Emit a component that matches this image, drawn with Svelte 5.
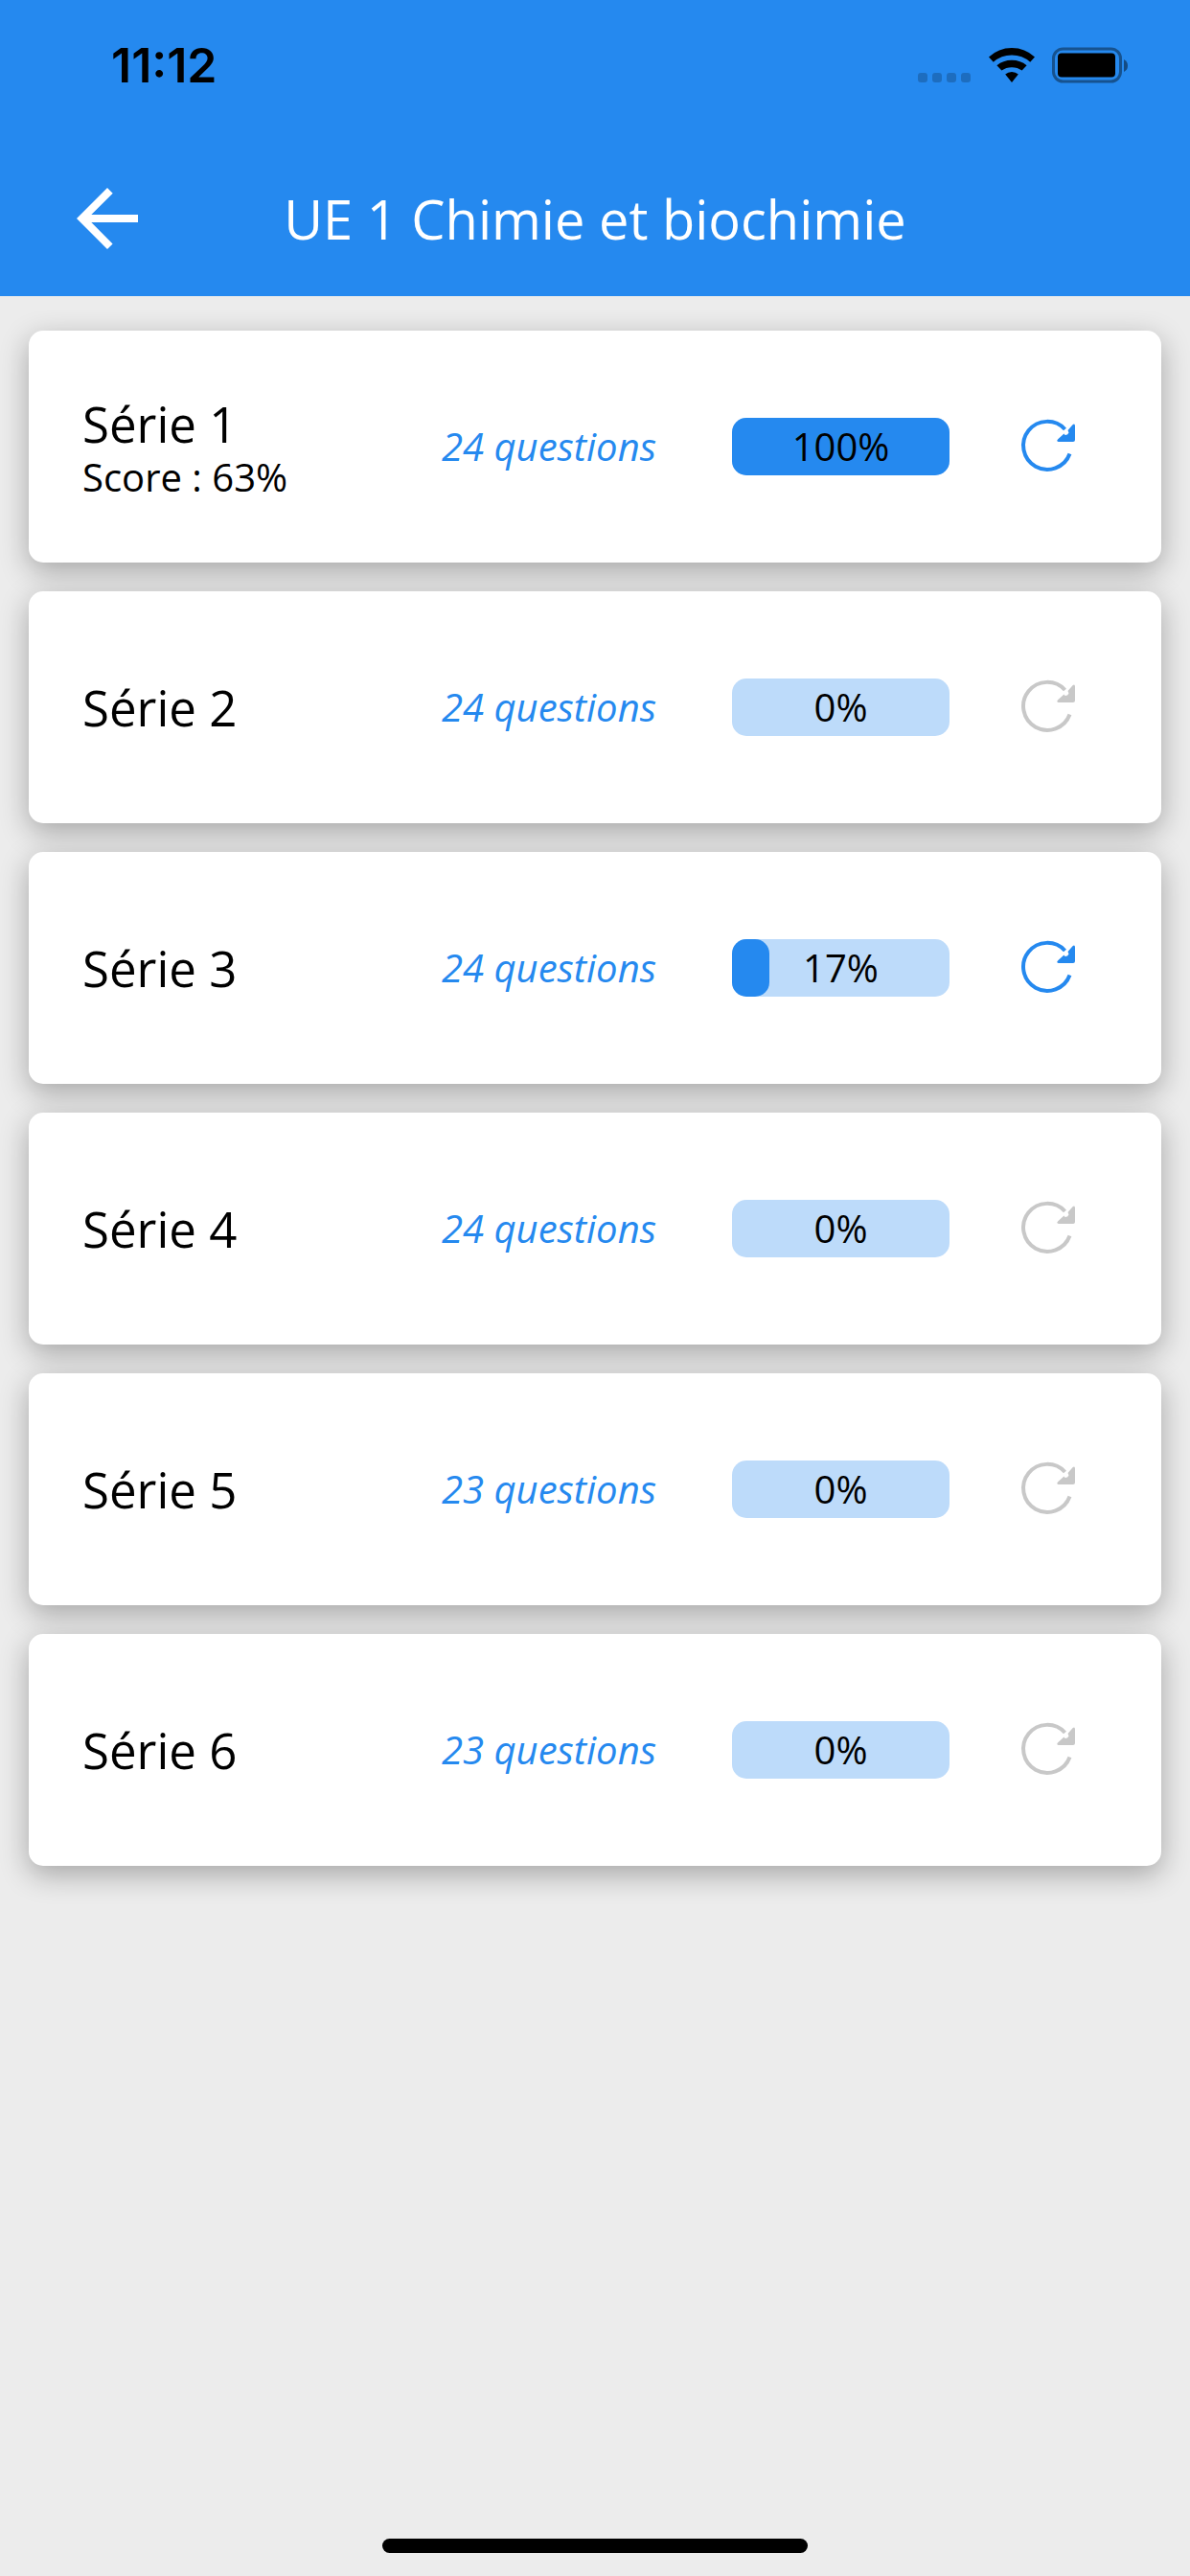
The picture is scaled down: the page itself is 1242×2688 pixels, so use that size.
<script>
  const series = [
    { name: 'Série 1', score: 63, questions: 24, progress: 100 },
    { name: 'Série 2', score: null, questions: 24, progress: 0 },
    { name: 'Série 3', score: null, questions: 24, progress: 17 },
    { name: 'Série 4', score: null, questions: 24, progress: 0 },
    { name: 'Série 5', score: null, questions: 23, progress: 0 },
    { name: 'Série 6', score: null, questions: 23, progress: 0 }
  ];
</script>

<div class="screen">
  <header>
    <div class="status">
      <time>11:12</time>
      <div class="indicators">
        <svg class="signal" viewBox="0 0 56 38" aria-hidden="true">
          <rect x="0" y="27" width="10" height="10" rx="3" />
          <rect x="15" y="27" width="10" height="10" rx="3" />
          <rect x="30" y="27" width="10" height="10" rx="3" />
          <rect x="45" y="27" width="10" height="10" rx="3" />
        </svg>
        <svg class="wifi" viewBox="0 0 48 38" aria-hidden="true">
          <path d="M0 10.600Q10 1 24 1T48 10.600L43.200 15.800Q35 8.600 24 8.600T4.800 15.800Z" />
          <path d="M8.400 19.200Q15 13.700 24 13.700T39.600 19.200L34.600 24.600Q30 21.200 24 21.200T13.400 24.600Z" />
          <path d="M17.200 28.600Q20 26 24 26T30.800 28.600L24 37Z" />
        </svg>
        <svg class="battery" viewBox="0 0 80 38" aria-hidden="true">
          <rect class="shell" x="1.500" y="2" width="70" height="34" rx="10" />
          <rect x="6" y="6.500" width="60" height="25" rx="4" />
          <path class="cap" d="M75 13Q79 15 79 19.500T75 26Z" />
        </svg>
      </div>
    </div>
    <nav>
      <button class="back" type="button" aria-label="Retour">
        <svg viewBox="0 0 64 64" aria-hidden="true">
          <path d="M64 28H15.300L37.700 5.700 32 0 0 32 32 64 37.600 58.400 15.300 36H64Z" />
        </svg>
      </button>
      <h1>UE 1 Chimie et biochimie</h1>
    </nav>
  </header>

  <main>
    {#each series as item}
      <article>
        <div class="label">
          <h2>{item.name}</h2>
          {#if item.score !== null}
            <p>Score : {item.score}%</p>
          {/if}
        </div>
        <span class="count">{item.questions} questions</span>
        <div class="bar" role="progressbar" aria-label={item.name} aria-valuenow={item.progress} aria-valuemin="0" aria-valuemax="100">
          <div class="fill" style:width="{item.progress}%"></div>
          <span>{item.progress}%</span>
        </div>
        <button class="restart" type="button" disabled={item.progress === 0} aria-label="Recommencer {item.name}">
          <svg viewBox="0 0 60 60" aria-hidden="true">
            <path class="arc" d="M47.500 12A25 25 0 1 0 52.500 37.500" />
            <path class="head" d="M55.500 7.200Q58 5.500 58 8.500V23Q58 25 56 25H41Q38 24.500 40.200 22.200L46.500 16.500 47.500 18 50 17.500 51.500 15.500 50.500 13Z" />
          </svg>
        </button>
      </article>
    {/each}
  </main>

  <footer><div class="home"></div></footer>
</div>

<style>
  :global(body) {
    background: #ececec;
  }
  .screen {
    display: flex;
    flex-direction: column;
    min-height: 100vh;
    background: #ececec;
    color: #000;
    font-family: "Open Sans", sans-serif;
  }
  h1, h2, p {
    margin: 0;
    font-weight: 400;
  }
  button {
    display: flex;
    padding: 0;
    border: 0;
    background: none;
  }
  svg {
    display: block;
  }
  header {
    background: #2589ef;
  }
  .status {
    display: flex;
    align-items: center;
    justify-content: space-between;
    height: 136px;
    padding: 0 64px 0 116px;
  }
  time {
    font: 600 50px/56px Inter, sans-serif;
  }
  .indicators {
    display: flex;
    align-items: center;
  }
  .signal {
    width: 56px;
    height: 38px;
    margin-right: 18px;
    fill: rgb(0 0 0 / 0.2);
  }
  .wifi {
    width: 48px;
    height: 38px;
    margin-right: 18px;
  }
  .battery {
    width: 80px;
    height: 38px;
  }
  .shell {
    fill: none;
    stroke: rgb(0 0 0 / 0.4);
    stroke-width: 3;
  }
  .cap {
    fill: rgb(0 0 0 / 0.45);
  }
  nav {
    display: grid;
    grid-template-columns: 1fr auto 1fr;
    align-items: center;
    height: 173px;
    padding: 10px 80px 0;
    box-sizing: border-box;
  }
  .back svg {
    width: 64px;
    height: 64px;
    fill: #fff;
  }
  h1 {
    color: #fff;
    font-size: 56px;
    line-height: 72px;
  }
  main {
    display: flex;
    flex-direction: column;
    gap: 30px;
    padding: 36px 30px;
  }
  article {
    display: grid;
    grid-template-columns: 337fr 300fr 309fr 124fr;
    align-items: center;
    justify-items: center;
    min-height: 242px;
    padding: 0 56px;
    box-sizing: border-box;
    border-radius: 15px;
    background: #fff;
    box-shadow: 0 9px 30px rgb(0 0 0 / 0.3);
  }
  .label {
    justify-self: start;
  }
  h2 {
    font-size: 51px;
    line-height: 64px;
  }
  p, .count, .bar {
    font-size: 40px;
    line-height: 48px;
  }
  .count {
    color: #2589ef;
    font-style: italic;
    white-space: nowrap;
  }
  .bar {
    display: grid;
    align-items: center;
    width: 227px;
    height: 60px;
    border-radius: 15px;
    background: #bddbfa;
    text-align: center;
  }
  .fill, .bar span {
    grid-area: 1 / 1;
  }
  .fill {
    height: 100%;
    border-radius: 15px;
    background: #2589ef;
  }
  .restart {
    color: #2589ef;
  }
  .restart:disabled {
    color: #c8c8c8;
  }
  .restart svg {
    width: 60px;
    height: 60px;
  }
  .arc {
    fill: none;
    stroke: currentColor;
    stroke-width: 4;
  }
  .head {
    fill: currentColor;
  }
  footer {
    display: flex;
    justify-content: center;
    margin-top: auto;
    padding-bottom: 24px;
  }
  .home {
    width: 444px;
    height: 15px;
    border-radius: 8px;
    background: #000;
  }
</style>
